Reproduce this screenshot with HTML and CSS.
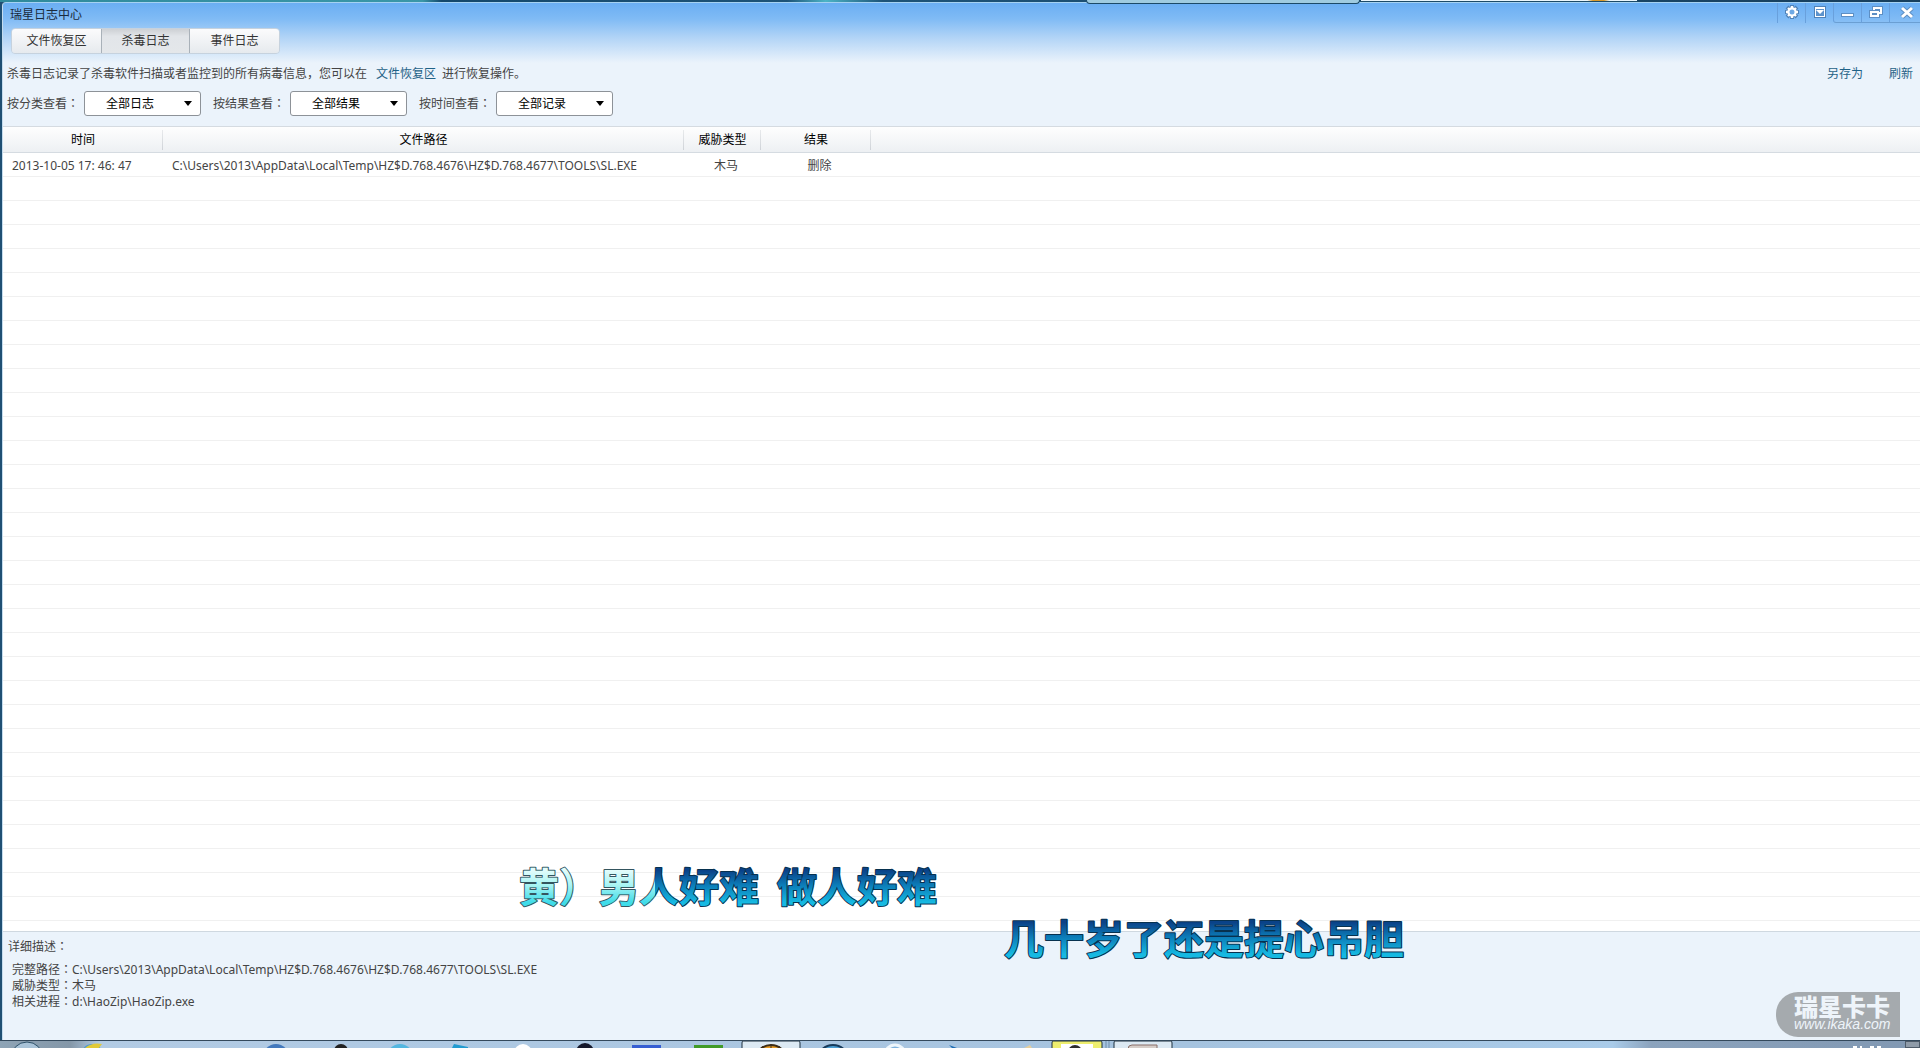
FILE: index.html
```html
<!DOCTYPE html>
<html lang="zh-CN">
<head>
  <meta charset="UTF-8">
  <title>瑞星日志中心</title>
  <meta name="viewport" content="width=device-width, initial-scale=1.0">
  <link rel="stylesheet" href="styles.css">
</head>
<body>
  <div class="behind">
    <div class="behind-window pale"></div>
    <div class="behind-window white"></div>
  </div>
  <main class="window">
    <header class="titlebar">
      <h1 class="title">瑞星日志中心</h1>
      <div class="window-buttons">
        <button class="win-btn" aria-label="设置">
          <svg width="16" height="16" viewBox="0 0 16 16"><g stroke="#4f82b8" stroke-width="4"><path d="M8 1v14M1 8h14M3 3l10 10M13 3l-10 10"/></g><g stroke="#fff" stroke-width="2.400"><path d="M8 2v12M2 8h12M4 4l8 8M12 4l-8 8"/></g><circle cx="8" cy="8" r="3.600" fill="#6fa9e4" stroke="#fff" stroke-width="2.200"/></svg>
        </button>
        <button class="win-btn" aria-label="菜单">
          <svg width="16" height="16" viewBox="0 0 16 16"><path d="M2 2h12v12H2z" fill="#4f82b8"/><path d="M3 3h10v10H3z" fill="#fff"/><path d="M4 5h8v7H4z" fill="#5d93cc"/><path d="M4 6h8l-4 4z" fill="#fff"/></svg>
        </button>
        <button class="win-btn framed first" aria-label="最小化">
          <svg width="16" height="16" viewBox="0 0 16 16"><path d="M1 9h13v4H1z" fill="#5d8fc4"/><path d="M2 10h11v2H2z" fill="#fff"/></svg>
        </button>
        <button class="win-btn framed" aria-label="还原">
          <svg width="16" height="16" viewBox="0 0 16 16" fill="none"><path d="M6 6V4h7v5h-3M3 8h7v4H3z" stroke="#5d8fc4" stroke-width="4"/><path d="M6 6V4h7v5h-3M3 8h7v4H3z" stroke="#fff" stroke-width="2"/></svg>
        </button>
        <button class="win-btn framed close" aria-label="关闭">
          <svg width="16" height="16" viewBox="0 0 16 16"><path d="M3 4l10 9M13 4l-10 9" stroke="#5d8fc4" stroke-width="5"/><path d="M3 4l10 9M13 4l-10 9" stroke="#fff" stroke-width="3"/></svg>
        </button>
      </div>
    </header>

    <nav class="tabs">
      <button class="tab">文件恢复区</button>
      <button class="tab active">杀毒日志</button>
      <button class="tab">事件日志</button>
    </nav>

    <div class="intro">
      <p>杀毒日志记录了杀毒软件扫描或者监控到的所有病毒信息，您可以在<a class="restore-link" href="#">文件恢复区</a>进行恢复操作。</p>
      <div class="actions">
        <a href="#">另存为</a>
        <a href="#">刷新</a>
      </div>
    </div>

    <form class="filters">
      <label for="byType">按分类查看<span lang="zh-TW">：</span></label>
      <select id="byType"><option>全部日志</option></select>
      <label for="byResult">按结果查看<span lang="zh-TW">：</span></label>
      <select id="byResult"><option>全部结果</option></select>
      <label for="byTime">按时间查看<span lang="zh-TW">：</span></label>
      <select id="byTime"><option>全部记录</option></select>
    </form>

    <div class="log">
      <table class="log-table">
        <colgroup>
          <col class="col-time">
          <col class="col-path">
          <col class="col-type">
          <col class="col-result">
          <col>
        </colgroup>
        <thead>
          <tr><th>时间</th><th>文件路径</th><th>威胁类型</th><th>结果</th><th></th></tr>
        </thead>
        <tbody>
          <tr>
            <td>2013-10-05 17: 46: 47</td>
            <td>C:\Users\2013\AppData\Local\Temp\HZ$D.768.4676\HZ$D.768.4677\TOOLS\SL.EXE</td>
            <td class="center">木马</td>
            <td class="center">删除</td>
            <td></td>
          </tr>
        </tbody>
      </table>
      <div class="empty-rows"></div>
    </div>

    <section class="details">
      <h2>详细描述<span lang="zh-TW">：</span></h2>
      <p>完整路径<span lang="zh-TW">：</span>C:\Users\2013\AppData\Local\Temp\HZ$D.768.4676\HZ$D.768.4677\TOOLS\SL.EXE</p>
      <p>威胁类型<span lang="zh-TW">：</span>木马</p>
      <p>相关进程<span lang="zh-TW">：</span>d:\HaoZip\HaoZip.exe</p>
    </section>
  </main>

  <footer class="taskbar">
    <svg width="1905" height="7">
      <circle cx="27" cy="17" r="16" fill="#a9c3d8" stroke="#2d5068"/>
      <circle cx="92" cy="14" r="11" fill="#4a9ad8"/><path d="M85 7q7-6 17-4l-3 4z" fill="#e2ca38"/>
      <circle cx="276" cy="16" r="13" fill="#4379bd"/>
      <circle cx="341" cy="10" r="7" fill="#222"/>
      <circle cx="400" cy="16" r="13" fill="#54b7e0"/>
      <path d="M454 3l14 3v1h-16z" fill="#229bd0"/>
      <circle cx="523" cy="12" r="9" fill="#fff"/>
      <circle cx="585" cy="11" r="9" fill="#15182c"/>
      <path d="M632 4h29v3h-29z" fill="#365ed2"/>
      <path d="M694 4h29v3h-29z" fill="#419b28"/>
      <path d="M742 8V2q0-2 1-2h56q1 0 1 2V8" fill="#dce9f3" stroke="#1d2f3c"/>
      <circle cx="771" cy="20" r="16" fill="#e89c25" stroke="#3c2d18" stroke-width="2"/>
      <path d="M771 3v4M763 5l-1 2M779 5l1 2" stroke="#3c2d18"/>
      <circle cx="833" cy="20" r="16" fill="#4c9fd4" stroke="#173a5a" stroke-width="2"/>
      <circle cx="895" cy="14" r="10" fill="#7fb3df" stroke="#eef6fc" stroke-width="3"/>
      <path d="M949 4l8 3h-5z" fill="#1b6cb4"/>
      <path d="M1024 7l6-3 2 3z" fill="#e5cf9d"/>
      <path d="M1052 8V2q0-2 1-2h48q1 0 1 2V8" fill="#eeee6e" stroke="#1d2f3c"/>
      <path d="M1061 3h32v4h-32z" fill="#fff"/><circle cx="1075" cy="11" r="7" fill="#2e2e2e"/>
      <path d="M1106 0v7M1109 0v7" stroke="#6f8ea9"/>
      <path d="M1114 8V2q0-2 1-2h56q1 0 1 2V8" fill="#dce9f3" stroke="#1d2f3c"/>
      <path d="M1128 8q0-4 4-4h25v4" fill="#d6cdc8" stroke="#8a6f68"/>
      <path d="M1853 6h4M1860 6h2M1870 6h4M1877 6h4" stroke="#fff" stroke-width="2"/>
    </svg>
    <span class="show-desktop"></span>
  </footer>

  <svg class="lyrics" width="920" height="130" viewBox="0 0 920 130">
    <defs>
      <linearGradient id="unsung" x1="0" y1="0" x2="0" y2="1">
        <stop offset="0.25" stop-color="#0a4288"/>
        <stop offset="0.5" stop-color="#0c7cb8"/>
        <stop offset="0.8" stop-color="#16b9e2"/>
      </linearGradient>
      <linearGradient id="sung" x1="0" y1="0" x2="0" y2="1">
        <stop offset="0.25" stop-color="#e2fcfb"/>
        <stop offset="0.5" stop-color="#a9f4f3"/>
        <stop offset="0.8" stop-color="#3fdce9"/>
      </linearGradient>
      <clipPath id="sungPart"><path d="M0 0h146v70H0z"/></clipPath>
      <clipPath id="unsungPart"><path d="M146 0h400v70H146z"/></clipPath>
    </defs>
    <text class="sung" clip-path="url(#sungPart)" x="10" y="50">黄）男人好难</text>
    <text class="unsung" clip-path="url(#unsungPart)" x="10" y="50" aria-hidden="true">黄）男人好难</text>
    <text class="unsung" x="268" y="50">做人好难</text>
    <text class="unsung" x="495" y="102">几十岁了还是提心吊胆</text>
  </svg>

  <div class="watermark">
    <strong>瑞星卡卡</strong>
    <em>www.ikaka.com</em>
  </div>
</body>
</html>
```
FILE: styles.css
```css
* {
  box-sizing: border-box;
}
body {
  margin: 0;
  height: 100vh;
  display: flex;
  flex-direction: column;
  overflow: hidden;
  position: relative;
  background: #1f4f73;
  font-family: "Noto Sans", "Noto Sans CJK SC", sans-serif;
  font-size: 12px;
  line-height: 16px;
  color: #444;
}
h1, h2, p {
  margin: 0;
  font-size: 12px;
  font-weight: normal;
}
button, select {
  font: inherit;
}
a {
  color: #1f6287;
  text-decoration: none;
}
.behind {
  height: 2px;
  flex: none;
  background: linear-gradient(90deg, #2f8a9c 0%, #3a97a8 22%, #14486c 23%, #1d5378 41%, #4cb4c6 43%, #1d5378 46%, #173f5e 100%);
}
.behind-window {
  position: absolute;
  top: 0;
  border: 1px solid #1c4a68;
  border-top: 0;
  z-index: 1;
}
.behind-window.pale {
  left: 1086px;
  width: 274px;
  height: 4px;
  background: #9fcbe0;
  border-radius: 0 0 4px 4px;
}
.behind-window.white {
  left: 1360px;
  width: 278px;
  height: 2px;
  background: linear-gradient(90deg, #eaf6fc 82%, #d99a2c 84%, #d99a2c 88%, #eaf6fc 90%);
}
.window {
  flex: 1;
  min-height: 0;
  margin-left: 2px;
  display: flex;
  flex-direction: column;
  border-top: 1px solid #a5d2f2;
  border-left: 1px solid #c4dcee;
  border-radius: 4px 0 0 0;
  background: linear-gradient(#6aaef3 0, #80bbf5 16px, #b0d3f6 34px, #ebf3fb 60px);
}
.titlebar {
  display: flex;
  justify-content: space-between;
  height: 25px;
}
.title {
  padding: 4px 0 0 7px;
  color: #1a2a3c;
}
.window-buttons {
  display: flex;
}
.win-btn {
  display: flex;
  justify-content: center;
  align-items: flex-start;
  width: 28px;
  height: 20px;
  padding: 1px 0 0;
  border: 0;
  border-left: 1px solid #69a0dc;
  background: none;
}
.win-btn.framed {
  border-bottom: 1px solid #6b9fd3;
}
.win-btn.first {
  border-bottom-left-radius: 3px;
}
.win-btn.close {
  width: 31px;
  padding-left: 4px;
}
.tabs {
  display: flex;
  align-self: flex-start;
  margin-left: 8px;
  border: 1px solid #c6d2de;
  border-radius: 4px;
  overflow: hidden;
}
.tab {
  width: 89px;
  height: 24px;
  padding: 0;
  border: 0;
  background: linear-gradient(#fbfbfc, #e6eaee);
  color: #333;
}
.tab.active {
  border: 1px solid #a9b1b9;
  border-width: 0 1px;
  background: linear-gradient(#cdd0d4, #e2e5e9 30%, #e4e7ea);
}
.intro {
  display: flex;
  justify-content: space-between;
  padding: 12px 7px 0 4px;
}
.restore-link {
  margin: 0 6px 0 9px;
}
.actions {
  display: flex;
  gap: 26px;
}
.filters {
  display: flex;
  align-items: center;
  padding: 9px 0 10px 4px;
}
.filters label {
  width: 77px;
}
.filters select {
  width: 117px;
  height: 25px;
  margin-right: 12px;
  padding: 0 21px;
  appearance: none;
  border: 1px solid #8d9298;
  border-radius: 3px;
  color: #000;
  background: #fff url("data:image/svg+xml,%3Csvg xmlns='http://www.w3.org/2000/svg' width='8' height='5'%3E%3Cpath d='M0 0h8L4 5z'/%3E%3C/svg%3E") no-repeat right 8px center;
}
.log {
  flex: 1;
  display: flex;
  flex-direction: column;
  background: #fff;
}
.log-table {
  width: 100%;
  table-layout: fixed;
  border-collapse: separate;
  border-spacing: 0;
}
.col-time { width: 160px; }
.col-path { width: 521px; }
.col-type { width: 77px; }
.col-result { width: 110px; }
.log-table th {
  height: 27px;
  padding: 0;
  border-top: 1px solid #d5dbe1;
  border-bottom: 1px solid #d5dbe1;
  background:
    linear-gradient(#e8eaec, #cfd3d8) no-repeat right 3px / 1px 20px,
    linear-gradient(#fefefe, #edf0f3);
  color: #000;
  font-weight: normal;
}
.log-table th:last-child {
  background: linear-gradient(#fefefe, #edf0f3);
}
.log-table td {
  height: 24px;
  padding: 2px 9px 0;
  border-bottom: 1px solid #f0f0f0;
  white-space: nowrap;
}
.log-table td.center {
  padding: 2px 0 0 7px;
  text-align: center;
}
.empty-rows {
  flex: 1;
  background: repeating-linear-gradient(#fff 0, #fff 23px, #f0f0f0 23px, #f0f0f0 24px);
}
.details {
  height: 109px;
  padding: 7px 5px;
  border-top: 1px solid #cfd8e0;
  background: #ebf3fb;
}
.details h2 {
  margin-bottom: 7px;
}
.details p {
  padding-left: 4px;
}
.taskbar {
  display: flex;
  justify-content: space-between;
  height: 8px;
  flex: none;
  overflow: hidden;
  border-top: 1px solid #34495c;
  background: linear-gradient(90deg, #8ea4b6 0, #8497a8 70px, #b2cbe4 100px, #a5c3df 62%, #a9cbe9 84%, #8ba3bd 86%, #8198b2 100%);
}
.taskbar svg {
  flex: 0 1 auto;
  min-width: 0;
}
.show-desktop {
  flex: none;
  width: 15px;
  border: 1px solid #4e5b69;
  background: #8f9ba8;
}
.lyrics {
  position: absolute;
  left: 509px;
  bottom: 66px;
  font-family: "Noto Sans CJK SC", sans-serif;
  font-size: 40px;
  font-weight: bold;
  pointer-events: none;
}
.lyrics text {
  paint-order: stroke;
  stroke-width: 2px;
  stroke-linejoin: round;
}
.sung {
  fill: url(#sung);
  stroke: #34555f;
}
.unsung {
  fill: url(#unsung);
  stroke: #07314f;
}
.watermark {
  position: absolute;
  right: 20px;
  bottom: 11px;
  width: 124px;
  height: 45px;
  padding: 6px 0 0 18px;
  border-radius: 22px 0 0 22px;
  background: #a5aaae;
  color: #eef4fa;
}
.watermark strong,
.watermark em {
  display: block;
}
.watermark strong {
  font-size: 24px;
  font-weight: 900;
  line-height: 18px;
}
.watermark em {
  font-family: "Liberation Sans", sans-serif;
  font-size: 14px;
  line-height: 16px;
}
```
